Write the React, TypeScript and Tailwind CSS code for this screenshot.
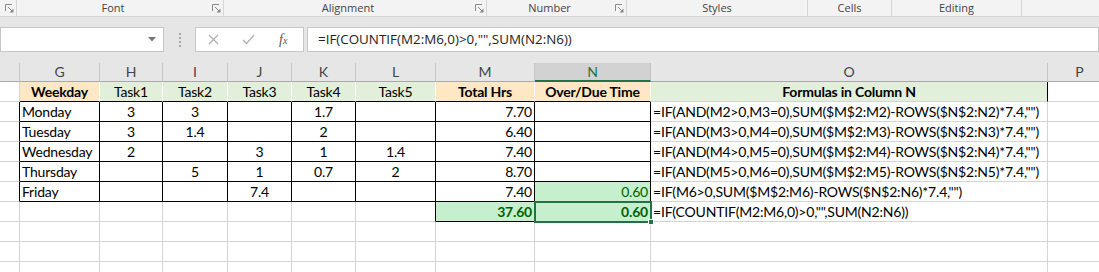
import React from 'react';

const grid = 'grid grid-cols-[20px_80px_63px_65px_64px_64px_80px_99px_116px_397px_64px]';

const Launcher: React.FC = () => (
  <svg width="9" height="9" viewBox="0 0 9 9" className="shrink-0">
    <path d="M0.5 7V0.5H7" fill="none" stroke="#8a8a8a" strokeWidth="1" />
    <path d="M3 3L7.5 7.5" stroke="#8a8a8a" strokeWidth="1" />
    <path d="M8.5 4.5V8.5H4.5Z" fill="#8a8a8a" />
  </svg>
);

const Group: React.FC<{ w: string; label?: string; launcher?: boolean }> = ({ w, label, launcher }) => (
  <div className={`${w} flex h-full items-center border-r border-[#d6d6d6]`}>
    <span className="flex-1 text-center">{label}</span>
    {launcher && (
      <span className="flex w-[14px] justify-center">
        <Launcher />
      </span>
    )}
  </div>
);

const Cell: React.FC<{ className?: string; children?: React.ReactNode }> = ({ className = '', children }) => (
  <div
    className={`h-[20px] border-r border-b border-[#d4d4d4] px-[2px] flex items-end whitespace-nowrap leading-[19px] ${className}`}
  >
    {children}
  </div>
);

const formulas = [
  '=IF(AND(M2>0,M3=0),SUM($M$2:M2)-ROWS($N$2:N2)*7.4,"")',
  '=IF(AND(M3>0,M4=0),SUM($M$2:M3)-ROWS($N$2:N3)*7.4,"")',
  '=IF(AND(M4>0,M5=0),SUM($M$2:M4)-ROWS($N$2:N4)*7.4,"")',
  '=IF(AND(M5>0,M6=0),SUM($M$2:M5)-ROWS($N$2:N5)*7.4,"")',
  '=IF(M6>0,SUM($M$2:M6)-ROWS($N$2:N6)*7.4,"")',
];

const rows = [
  { day: 'Monday', t: ['3', '3', '', '1.7', ''], total: '7.70', over: '' },
  { day: 'Tuesday', t: ['3', '1.4', '', '2', ''], total: '6.40', over: '' },
  { day: 'Wednesday', t: ['2', '', '3', '1', '1.4'], total: '7.40', over: '' },
  { day: 'Thursday', t: ['', '5', '1', '0.7', '2'], total: '8.70', over: '' },
  { day: 'Friday', t: ['', '', '7.4', '', ''], total: '7.40', over: '0.60' },
];

const letters = ['', 'G', 'H', 'I', 'J', 'K', 'L', 'M', 'N', 'O', 'P'];

export default function App() {
  return (
    <div className="relative h-[272px] w-[1099px] overflow-hidden bg-white font-['Lato',sans-serif] text-[14px] tracking-[-0.2px] text-black">
      {/* ribbon group labels */}
      <div className="flex h-[17px] border-b border-[#d6d6d6] bg-[#f3f3f3] font-['Open_Sans',sans-serif] text-[11px] leading-[16px] tracking-normal text-[#444]">
        <Group w="w-[17px]" launcher />
        <Group w="w-[207px]" label="Font" launcher />
        <Group w="w-[263px]" label="Alignment" launcher />
        <Group w="w-[140px]" label="Number" launcher />
        <Group w="w-[181px]" label="Styles" />
        <Group w="w-[84px]" label="Cells" />
        <Group w="w-[130px]" label="Editing" />
      </div>

      {/* formula bar */}
      <div className="flex h-[46px] items-start bg-[#e6e6e6] pt-[10px] tracking-normal">
        <div className="flex h-[25px] w-[164px] items-center justify-end border border-[#c6c6c6] bg-white pr-[7px]">
          <svg width="8" height="5" viewBox="0 0 8 5">
            <path d="M0 0H8L4 4.5Z" fill="#777" />
          </svg>
        </div>
        <div className="flex h-[25px] w-[31px] flex-col items-center justify-center gap-[2px]">
          <span className="h-[2px] w-[2px] bg-[#a8a8a8]" />
          <span className="h-[2px] w-[2px] bg-[#a8a8a8]" />
          <span className="h-[2px] w-[2px] bg-[#a8a8a8]" />
          <span className="h-[2px] w-[2px] bg-[#a8a8a8]" />
        </div>
        <div className="flex h-[25px] w-[109px] items-center border border-[#c6c6c6] bg-white pl-[12px]">
          <svg width="11" height="11" viewBox="0 0 11 11">
            <path d="M1 1L10 10M10 1L1 10" stroke="#b0b0b0" strokeWidth="1.3" />
          </svg>
          <svg width="13" height="11" viewBox="0 0 13 11" className="ml-[23px]">
            <path d="M1 6L4.5 9.5L12 1" fill="none" stroke="#b0b0b0" strokeWidth="1.3" />
          </svg>
          <span className="ml-[24px] font-['Liberation_Serif',serif] text-[14px] italic text-[#555]">
            f<span className="text-[10px]">x</span>
          </span>
        </div>
        <div className="ml-[3px] flex h-[25px] flex-1 items-center border border-[#c6c6c6] bg-white pl-[10px] font-['Open_Sans',sans-serif] text-[13.4px] text-[#222]">
          =IF(COUNTIF(M2:M6,0)&gt;0,"",SUM(N2:N6))
        </div>
      </div>

      {/* column headers */}
      <div className={`${grid} h-[19px] bg-[#e6e6e6] text-[14px] tracking-normal text-[#444]`}>
        {letters.map((l, i) => (
          <div
            key={i}
            className={
              l === 'N'
                ? 'flex items-end justify-center border-r border-b-2 border-r-[#c0c0c0] border-b-[#217346] bg-[#d2d2d2] leading-[17px] text-[#217346]'
                : 'flex items-end justify-center border-r border-b border-r-[#c6c6c6] border-b-[#a8a8a8] leading-[18px]'
            }
          >
            {l}
          </div>
        ))}
      </div>

      {/* sheet */}
      <div className={grid}>
        {/* row 1 */}
        <Cell />
        <Cell className="justify-center border-r-white border-b-black bg-[#fde7c4] font-bold">Weekday</Cell>
        {['Task1', 'Task2', 'Task3', 'Task4', 'Task5'].map((t) => (
          <Cell key={t} className="justify-center border-r-white border-b-black bg-[#e2efda]">
            {t}
          </Cell>
        ))}
        <Cell className="justify-center border-r-white border-b-black bg-[#fde7c4] font-bold">Total Hrs</Cell>
        <Cell className="justify-center border-r-white border-b-black bg-[#fde7c4] font-bold">Over/Due Time</Cell>
        <Cell className="justify-center border-r-black bg-[#e2efda] font-bold">Formulas in Column N</Cell>
        <Cell />

        {/* rows 2-6 */}
        {rows.map((r, i) => (
          <React.Fragment key={r.day}>
            <Cell className="border-r-black" />
            <Cell className="border-r-black border-b-black">{r.day}</Cell>
            {r.t.map((v, j) => (
              <Cell key={j} className="justify-center border-r-black border-b-black">
                {v}
              </Cell>
            ))}
            <Cell className="justify-end border-r-black border-b-black">{r.total}</Cell>
            <Cell
              className={`justify-end border-r-black border-b-black ${r.over ? 'bg-[#c6efce] text-[#006100]' : ''}`}
            >
              {r.over}
            </Cell>
            <Cell>{formulas[i]}</Cell>
            <Cell />
          </React.Fragment>
        ))}

        {/* row 7 totals */}
        <Cell />
        <Cell />
        <Cell />
        <Cell />
        <Cell />
        <Cell />
        <Cell className="border-r-black" />
        <Cell className="justify-end border-r-black border-b-black bg-[#c6efce] font-bold text-[#006100]">37.60</Cell>
        <Cell className="relative justify-end border-r-black border-b-black bg-[#c6efce] font-bold text-[#006100]">
          0.60
          <div className="absolute left-[-1px] top-[-1px] z-10 h-[22px] w-[118px] border-2 border-[#217346]" />
          <div className="absolute bottom-[-4px] right-[-4px] z-20 h-[6px] w-[6px] border border-white bg-[#217346]" />
        </Cell>
        <Cell>=IF(COUNTIF(M2:M6,0)&gt;0,"",SUM(N2:N6))</Cell>
        <Cell />

        {/* empty rows */}
        {Array.from({ length: 33 }).map((_, i) => (
          <Cell key={`e${i}`} />
        ))}
      </div>
    </div>
  );
}
